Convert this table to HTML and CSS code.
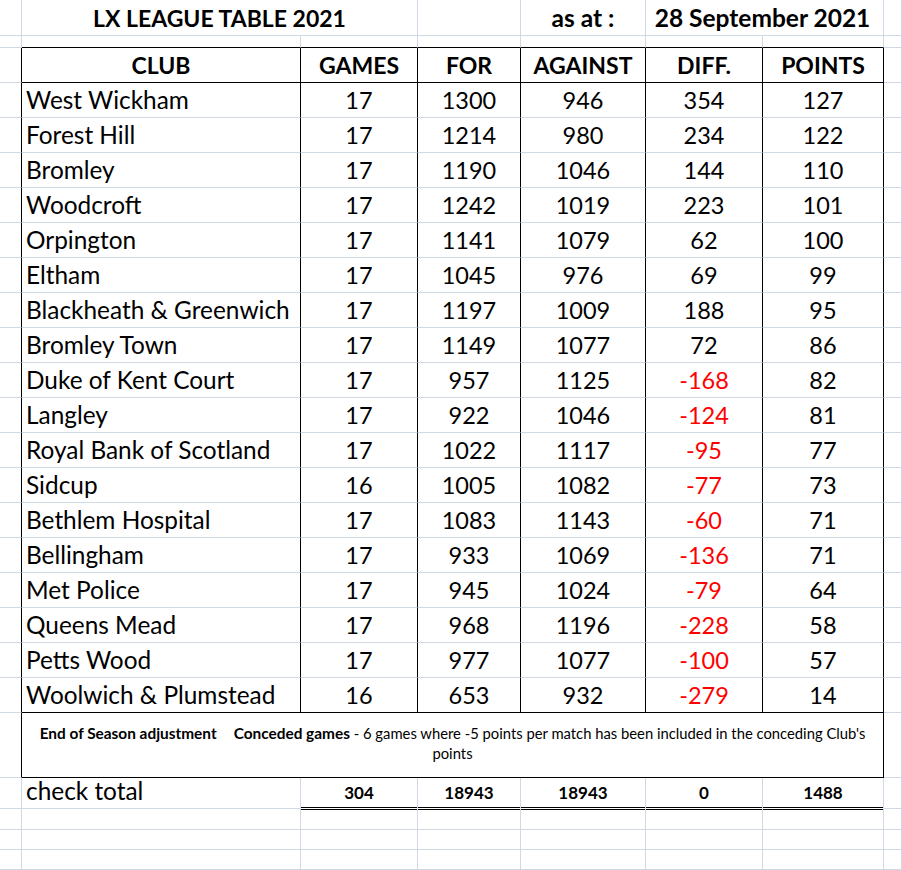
FILE: index.html
```html
<!DOCTYPE html>
<html lang="en">
<head>
<meta charset="utf-8">
<title>LX League Table 2021</title>
<link rel="stylesheet" href="styles.css">
</head>
<body>
<div class="sheet">
  <!-- title row -->
  <div class="c"></div>
  <div class="c t-title">LX LEAGUE TABLE 2021</div>
  <div class="c"></div>
  <div class="c t-asat">as at :</div>
  <div class="c t-date">28 September 2021</div>
  <div class="c"></div>

  <!-- spacer row -->
  <div class="c"></div>
  <div class="c top"></div><div class="c top"></div><div class="c top"></div>
  <div class="c top"></div><div class="c top"></div><div class="c top"></div>
  <div class="c"></div>

  <!-- header row -->
  <div class="c edge"></div>
  <div class="c hd">CLUB</div>
  <div class="c hd">GAMES</div>
  <div class="c hd">FOR</div>
  <div class="c hd">AGAINST</div>
  <div class="c hd">DIFF.</div>
  <div class="c hd">POINTS</div>
  <div class="c"></div>

  <!-- data rows -->
  <div class="c edge"></div><div class="c name">West Wickham</div><div class="c num">17</div><div class="c num">1300</div><div class="c num">946</div><div class="c num">354</div><div class="c num">127</div><div class="c"></div>
  <div class="c edge"></div><div class="c name">Forest Hill</div><div class="c num">17</div><div class="c num">1214</div><div class="c num">980</div><div class="c num">234</div><div class="c num">122</div><div class="c"></div>
  <div class="c edge"></div><div class="c name">Bromley</div><div class="c num">17</div><div class="c num">1190</div><div class="c num">1046</div><div class="c num">144</div><div class="c num">110</div><div class="c"></div>
  <div class="c edge"></div><div class="c name">Woodcroft</div><div class="c num">17</div><div class="c num">1242</div><div class="c num">1019</div><div class="c num">223</div><div class="c num">101</div><div class="c"></div>
  <div class="c edge"></div><div class="c name">Orpington</div><div class="c num">17</div><div class="c num">1141</div><div class="c num">1079</div><div class="c num">62</div><div class="c num">100</div><div class="c"></div>
  <div class="c edge"></div><div class="c name">Eltham</div><div class="c num">17</div><div class="c num">1045</div><div class="c num">976</div><div class="c num">69</div><div class="c num">99</div><div class="c"></div>
  <div class="c edge"></div><div class="c name">Blackheath &amp; Greenwich</div><div class="c num">17</div><div class="c num">1197</div><div class="c num">1009</div><div class="c num">188</div><div class="c num">95</div><div class="c"></div>
  <div class="c edge"></div><div class="c name">Bromley Town</div><div class="c num">17</div><div class="c num">1149</div><div class="c num">1077</div><div class="c num">72</div><div class="c num">86</div><div class="c"></div>
  <div class="c edge"></div><div class="c name">Duke of Kent Court</div><div class="c num">17</div><div class="c num">957</div><div class="c num">1125</div><div class="c num neg">-168</div><div class="c num">82</div><div class="c"></div>
  <div class="c edge"></div><div class="c name">Langley</div><div class="c num">17</div><div class="c num">922</div><div class="c num">1046</div><div class="c num neg">-124</div><div class="c num">81</div><div class="c"></div>
  <div class="c edge"></div><div class="c name">Royal Bank of Scotland</div><div class="c num">17</div><div class="c num">1022</div><div class="c num">1117</div><div class="c num neg">-95</div><div class="c num">77</div><div class="c"></div>
  <div class="c edge"></div><div class="c name">Sidcup</div><div class="c num">16</div><div class="c num">1005</div><div class="c num">1082</div><div class="c num neg">-77</div><div class="c num">73</div><div class="c"></div>
  <div class="c edge"></div><div class="c name">Bethlem Hospital</div><div class="c num">17</div><div class="c num">1083</div><div class="c num">1143</div><div class="c num neg">-60</div><div class="c num">71</div><div class="c"></div>
  <div class="c edge"></div><div class="c name">Bellingham</div><div class="c num">17</div><div class="c num">933</div><div class="c num">1069</div><div class="c num neg">-136</div><div class="c num">71</div><div class="c"></div>
  <div class="c edge"></div><div class="c name">Met Police</div><div class="c num">17</div><div class="c num">945</div><div class="c num">1024</div><div class="c num neg">-79</div><div class="c num">64</div><div class="c"></div>
  <div class="c edge"></div><div class="c name">Queens Mead</div><div class="c num">17</div><div class="c num">968</div><div class="c num">1196</div><div class="c num neg">-228</div><div class="c num">58</div><div class="c"></div>
  <div class="c edge"></div><div class="c name">Petts Wood</div><div class="c num">17</div><div class="c num">977</div><div class="c num">1077</div><div class="c num neg">-100</div><div class="c num">57</div><div class="c"></div>
  <div class="c edge"></div><div class="c name last">Woolwich &amp; Plumstead</div><div class="c num last">16</div><div class="c num last">653</div><div class="c num last">932</div><div class="c num neg last">-279</div><div class="c num last">14</div><div class="c"></div>

  <!-- note row -->
  <div class="c edge"></div>
  <div class="c note">
    <p class="note-text"><b>End of Season adjustment</b><b class="gap">Conceded games</b> - 6 games where -5 points per match has been included in the conceding Club's<br>points</p>
  </div>
  <div class="c"></div>

  <!-- total row -->
  <div class="c"></div>
  <div class="c total-label">check total</div>
  <div class="c total">304</div>
  <div class="c total">18943</div>
  <div class="c total">18943</div>
  <div class="c total">0</div>
  <div class="c total">1488</div>
  <div class="c"></div>

  <!-- empty rows -->
  <div class="c"></div><div class="c"></div><div class="c dbl"></div><div class="c dbl"></div><div class="c dbl"></div><div class="c dbl"></div><div class="c dbl"></div><div class="c"></div>
  <div class="c"></div><div class="c"></div><div class="c"></div><div class="c"></div><div class="c"></div><div class="c"></div><div class="c"></div><div class="c"></div>
  <div class="c"></div><div class="c"></div><div class="c"></div><div class="c"></div><div class="c"></div><div class="c"></div><div class="c"></div><div class="c"></div>
</div>
</body>
</html>
```

FILE: styles.css
```css
:root {
  --grid: #d0d7e5;
  --ink: #000000;
  --neg: #ff0000;
}

html, body {
  margin: 0;
  padding: 0;
  background: #ffffff;
}

body {
  font-family: Lato, "Liberation Sans", sans-serif;
  color: var(--ink);
}

.sheet {
  display: grid;
  width: 902px;
  grid-template-columns: 22px 279px 117px 103px 125px 117px 121px 18px;
  grid-template-rows: 36px 12px 35px repeat(18, 35px) 65px 31px 21px 20px 20px;
}

.c {
  box-sizing: border-box;
  border-right: 1px solid var(--grid);
  border-bottom: 1px solid var(--grid);
  white-space: nowrap;
  overflow: hidden;
  min-width: 0;
}

/* title row */
.t-title {
  grid-column: span 2;
  font-weight: 700;
  font-size: 23px;
  line-height: 36px;
  text-align: center;
}

.t-asat,
.t-date {
  font-weight: 700;
  font-size: 24.5px;
  line-height: 35px;
  text-align: center;
}

.t-date {
  grid-column: span 2;
  padding-right: 4px;
}

/* table borders */
.edge {
  border-right-color: var(--ink);
}

.top {
  border-bottom-color: var(--ink);
}

.hd {
  border-right-color: var(--ink);
  border-bottom-color: var(--ink);
  font-weight: 700;
  font-size: 23px;
  line-height: 34px;
  text-align: center;
}

.name {
  border-right-color: var(--ink);
  font-size: 24.4px;
  line-height: 34px;
  padding-left: 4px;
}

.num {
  border-right-color: var(--ink);
  font-size: 23.5px;
  line-height: 34px;
  text-align: center;
}

.neg {
  color: var(--neg);
}

.last {
  border-bottom-color: var(--ink);
}

/* note row */
.note {
  grid-column: span 6;
  border-right-color: var(--ink);
  border-bottom-color: var(--ink);
  display: flex;
  align-items: center;
  justify-content: center;
  padding-bottom: 4px;
  white-space: normal;
}

.note-text {
  margin: 0;
  font-size: 14.8px;
  line-height: 20px;
  text-align: center;
  white-space: nowrap;
}

.note-text b {
  font-size: 15.4px;
}

.note-text .gap {
  margin-left: 17px;
}

/* totals row */
.total-label {
  font-size: 24.4px;
  line-height: 26px;
  padding-left: 4px;
  overflow: visible;
}

.total {
  font-weight: 700;
  font-size: 17px;
  line-height: 30px;
  text-align: center;
  border-bottom-color: #ffffff;
  box-shadow: inset 0 -1px 0 var(--ink);
}

.dbl {
  box-shadow: inset 0 1px 0 var(--ink);
}
```
